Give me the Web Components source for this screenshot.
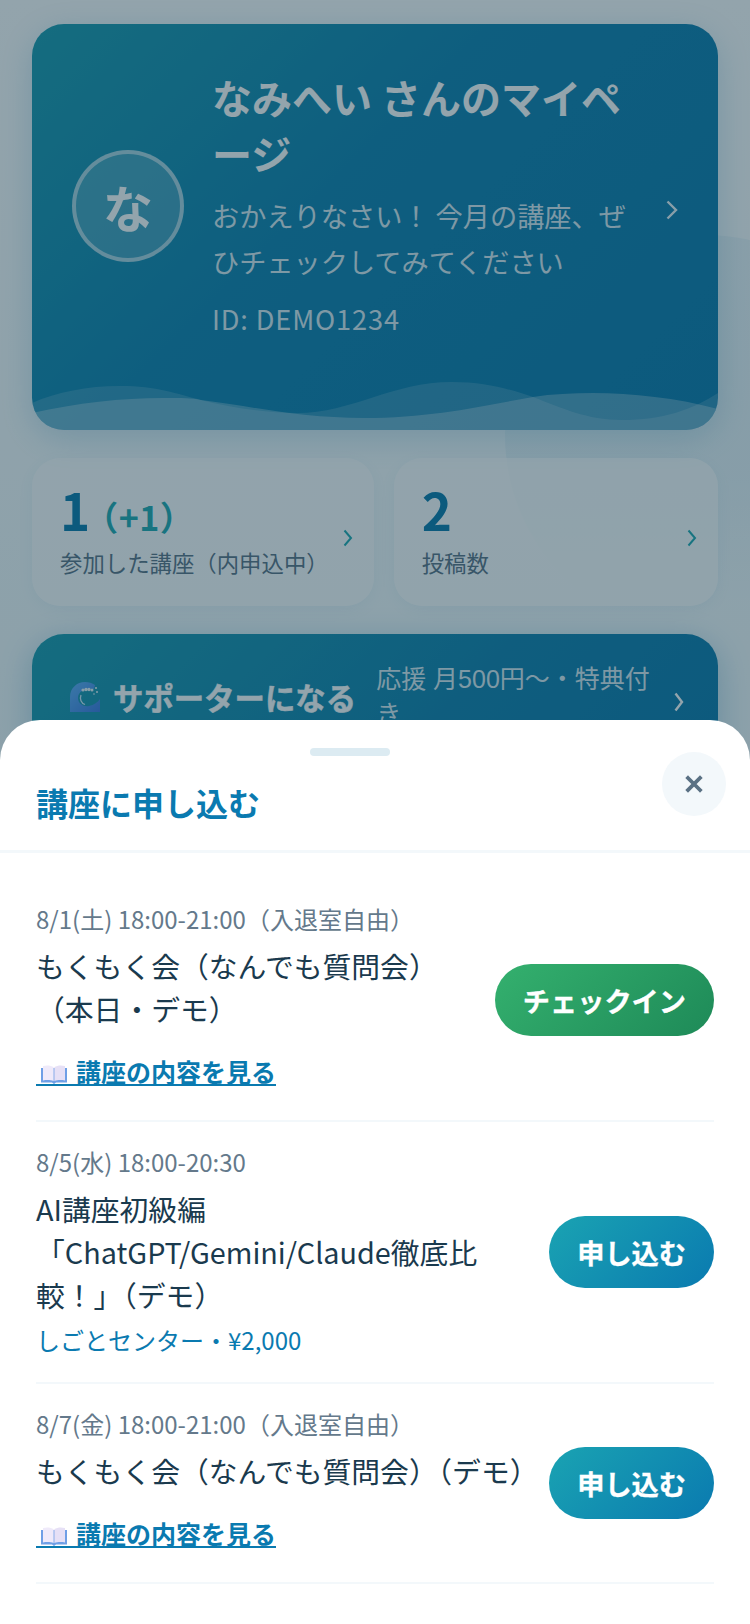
<!DOCTYPE html>
<html lang="ja">
<head>
<meta charset="utf-8">
<title>マイページ</title>
<style>
  html,body{margin:0;height:100%}
  body{
    width:750px;height:1624px;overflow:hidden;
    font-family:"Noto Sans CJK JP","Noto Sans",sans-serif;
    background:linear-gradient(180deg,#fff 0%,#f4fafc 40%,#e6f3f8 100%);
  }
</style>
</head>
<body>
<my-page>
  <hero-card name="なみへい" initial="な" member="DEMO1234"
    message="おかえりなさい！ 今月の講座、ぜひチェックしてみてください"></hero-card>
  <stat-row>
    <stat-card value="1" extra="（+1）" label="参加した講座（内申込中）"></stat-card>
    <stat-card value="2" label="投稿数"></stat-card>
  </stat-row>
  <support-card title-text="サポーターになる" note="応援 月500円〜・特典付き"></support-card>
</my-page>
<dim-layer></dim-layer>
<bottom-sheet heading="講座に申し込む">
  <course-row date="8/1(土) 18:00-21:00（入退室自由）" action="チェックイン" kind="go" link="講座の内容を見る">もくもく会（なんでも質問会）<br>（本日・デモ）</course-row>
  <course-row date="8/5(水) 18:00-20:30" action="申し込む" place="しごとセンター・¥2,000">AI講座初級編「ChatGPT/Gemini/Claude徹底比較！」（デモ）</course-row>
  <course-row date="8/7(金) 18:00-21:00（入退室自由）" action="申し込む" link="講座の内容を見る">もくもく会（なんでも質問会）（デモ）</course-row>
</bottom-sheet>

<script>
const JP='"Noto Sans CJK JP","Noto Sans",sans-serif'
// buttons on the original page keep the UA font, latin first
const BTN='"Liberation Sans","Noto Sans CJK JP",sans-serif'

function chevron(w,h,color,sw){
    return `<svg class="arrow" width="${w}" height="${h}" viewBox="0 0 ${w} ${h}"><path d="M1.500 1.500L${w-2} ${h/2}L1.500 ${h-1.500}" fill="none" stroke="${color}" stroke-width="${sw||2.400}"/></svg>`
}

class myPage extends HTMLElement{
    constructor(){
        super()
        this.attachShadow({mode:'open'})
        this.shadowRoot.innerHTML=`
        <style>
          :host{display:block;position:relative;height:100%;overflow:hidden}
          .blob{position:absolute;left:505px;top:235px;width:400px;height:400px;border-radius:50%;background:linear-gradient(180deg,rgba(10,122,176,.06) 60%,rgba(10,122,176,0) 95%)}
          main{position:relative;display:flex;flex-direction:column;gap:28px;padding:24px 32px 0}
        </style>
        <div class="blob"></div>
        <main><slot></slot></main>`
    }
}

class heroCard extends HTMLElement{
    constructor(){
        super()
        this.attachShadow({mode:'open'})
    }
    connectedCallback(){
        this.shadowRoot.innerHTML=`
        <style>
          :host{display:block}
          .card{
            position:relative;overflow:hidden;box-sizing:border-box;height:406px;
            display:flex;align-items:center;gap:20px;padding:45px 40px 88px 40px;
            border-radius:32px;color:#fff;font-family:${JP};
            background:linear-gradient(135deg,#1a9aae 0%,#0e80ae 42%,#0a78aa 100%);
            box-shadow:0 8px 32px rgba(10,122,176,.2);
          }
          .avatar{
            flex:none;box-sizing:border-box;width:112px;height:112px;border-radius:50%;margin-right:8px;
            display:flex;align-items:center;justify-content:center;
            border:4px solid rgba(255,255,255,.55);background:rgba(255,255,255,.2);
            font-size:50px;font-weight:700;
          }
          .text{flex:1;min-width:0;margin-bottom:5px}
          h1{margin:0 0 11px;font-size:40px;line-height:56px;font-weight:700}
          p{margin:0;font-size:27.200px;line-height:46px;color:rgba(255,255,255,.85)}
          .id{margin-top:14px;line-height:40px;color:rgba(255,255,255,.85);letter-spacing:.85px}
          .arrow{flex:none;margin-top:9px}
          .wave{position:absolute;left:0;bottom:0;width:100%;height:60px;display:block}
        </style>
        <div class="card">
          <div class="avatar">${this.getAttribute('initial')}</div>
          <div class="text">
            <h1>${this.getAttribute('name')} さんのマイページ</h1>
            <p>${this.getAttribute('message')}</p>
            <p class="id">ID: ${this.getAttribute('member')}</p>
          </div>
          ${chevron(12,20,'rgba(255,255,255,.92)')}
          <svg class="wave" viewBox="0 0 686 60" preserveAspectRatio="none">
            <path fill="rgba(255,255,255,.15)" d="M0 33C25 22 55 16 88 16C125 16 145 24 169 30C200 38 235 43 265 43C320 43 360 12 420 12C455 12 480 20 501 27C530 38 555 50 590 50C630 50 660 40 686 23V60H0Z"/>
            <path fill="rgba(255,255,255,.27)" d="M0 43C45 33 90 28 131 28C150 28 160 28 169 30C230 38 270 48 332 48C400 48 450 36 501 27C520 24 540 23 561 23C600 23 645 28 686 39V60H0Z"/>
          </svg>
        </div>`
    }
}

class statRow extends HTMLElement{
    constructor(){
        super()
        this.attachShadow({mode:'open'})
        this.shadowRoot.innerHTML=`
        <style>
          :host{display:grid;grid-template-columns:1fr 1fr;gap:20px}
        </style>
        <slot></slot>`
    }
}

class statCard extends HTMLElement{
    constructor(){
        super()
        this.attachShadow({mode:'open'})
    }
    connectedCallback(){
        const extra=this.getAttribute('extra')
        this.shadowRoot.innerHTML=`
        <style>
          :host{display:block}
          .card{
            box-sizing:border-box;height:148px;display:flex;align-items:center;gap:14px;
            padding:0 21px 0 28px;border-radius:28px;font-family:${JP};
            background:rgba(255,255,255,.72);box-shadow:0 4px 16px rgba(10,122,176,.06);
          }
          .body{flex:1;min-width:0;padding-bottom:7px}
          .num{display:flex;align-items:baseline;height:64px;line-height:64px;font-size:51.200px;font-weight:700;color:#0a78aa}
          .extra{font-size:34px;font-weight:700;color:#1fa8b0;margin-left:11px;letter-spacing:.5px;text-spacing-trim:trim-start}
          .label{margin-top:5px;font-size:22.400px;line-height:33.600px;white-space:nowrap;color:#5a7184}
          .arrow{flex:none;margin-top:12px}
        </style>
        <div class="card">
          <div class="body">
            <div class="num">${this.getAttribute('value')}${extra?`<span class="extra">${extra}</span>`:''}</div>
            <div class="label">${this.getAttribute('label')}</div>
          </div>
          ${chevron(10,18,'#1fa8b0',2)}
        </div>`
    }
}

class supportCard extends HTMLElement{
    constructor(){
        super()
        this.attachShadow({mode:'open'})
    }
    connectedCallback(){
        this.shadowRoot.innerHTML=`
        <style>
          :host{display:block}
          .card{
            box-sizing:border-box;height:126px;display:flex;align-items:center;
            padding:0 34px 0 38px;border-radius:32px;font-family:${BTN};color:#fff;
            background:linear-gradient(135deg,#1a9aae 0%,#0f7fac 60%,#0a78aa 100%);
            box-shadow:0 8px 32px rgba(10,122,176,.3);
          }
          .sea{flex:none;width:30px;height:30px;margin-right:13px}
          b{flex:none;font-size:30.400px;white-space:nowrap;margin-right:20px;-webkit-text-stroke:.5px #fff}
          .note{flex:1;min-width:0;font-size:25px;line-height:35px;color:rgba(255,255,255,.85)}
          .arrow{flex:none;margin:9px 0 0 10px}
        </style>
        <div class="card">
          <svg class="sea" viewBox="0 0 30 30">
            <defs><linearGradient id="sea" x1="0" y1="0" x2="1" y2="1"><stop offset="0" stop-color="#5fb0f8"/><stop offset="1" stop-color="#3a78e0"/></linearGradient></defs>
            <path fill="url(#sea)" d="M0 30V15C0 6 7 0 15 0C19 0 22 1 25 3L24 7C16 6 8 9 8 16C8 22 14 25 19 24C24 23 28 20 30 17V30Z"/>
            <path fill="none" stroke="#cfe8fb" stroke-width="1.300" d="M11 13C9.500 17 11 21 15 22.500"/>
            <g fill="#e8f2fa"><circle cx="13" cy="8" r="1.600"/><circle cx="16" cy="7.500" r="1.700"/><circle cx="19" cy="7.500" r="1.700"/><circle cx="22" cy="8" r="1.500"/><circle cx="26" cy="6" r="1"/><circle cx="27" cy="10" r="1"/><circle cx="24" cy="12" r=".8"/></g>
          </svg>
          <b>${this.getAttribute('title-text')}</b>
          <span class="note">${this.getAttribute('note')}</span>
          ${chevron(10,20,'#fff')}
        </div>`
    }
}

class dimLayer extends HTMLElement{
    constructor(){
        super()
        this.attachShadow({mode:'open'})
        this.shadowRoot.innerHTML=`
        <style>
          :host{position:fixed;inset:0;display:block;background:rgba(15,53,71,.45)}
        </style>`
    }
}

class bottomSheet extends HTMLElement{
    constructor(){
        super()
        this.attachShadow({mode:'open'})
    }
    connectedCallback(){
        this.shadowRoot.innerHTML=`
        <style>
          :host{position:fixed;left:0;right:0;bottom:0;height:904px;display:block;background:#fff;border-radius:40px 40px 0 0;font-family:${JP}}
          header{box-sizing:border-box;height:133px;border-bottom:3px solid #f3f8fb;display:flex;flex-direction:column;padding:28px 36px 0}
          .grip{flex:none;width:80px;height:8px;border-radius:4px;background:#dcebf2;margin-left:274px}
          h2{margin:28px 0 0;font-size:32px;line-height:36px;font-weight:700;color:#0a7ab0}
          .close{position:absolute;right:24px;top:32px;width:64px;height:64px;border-radius:50%;background:#f3f8fb;display:flex;align-items:center;justify-content:center}
          .list{padding:26px 36px 0}
        </style>
        <header>
          <div class="grip"></div>
          <h2>${this.getAttribute('heading')}</h2>
          <div class="close"><svg width="20" height="20" viewBox="0 0 20 20"><path d="M4 4L16 16M16 4L4 16" stroke="#5a7184" stroke-width="3.800" stroke-linecap="square" fill="none"/></svg></div>
        </header>
        <div class="list"><slot></slot></div>`
    }
}

class courseRow extends HTMLElement{
    constructor(){
        super()
        this.attachShadow({mode:'open'})
    }
    getBook(){
        return `<svg width="26" height="19" viewBox="0 0 26 19">
          <path fill="#6f9fe6" d="M0 3H26V17.500H15L13 19L11 17.500H0Z"/>
          <path fill="#efeafa" d="M2 1C6 0 10 .5 12.600 2V16C10 15 6 14.600 2 15.400Z"/>
          <path fill="#e6e0f6" d="M24 1C20 0 16 .5 13.400 2V16C16 15 20 14.600 24 15.400Z"/>
        </svg>`
    }
    connectedCallback(){
        const place=this.getAttribute('place')
        const link=this.getAttribute('link')
        const go=this.getAttribute('kind')==='go'
        this.shadowRoot.innerHTML=`
        <style>
          :host{display:flex;align-items:center;gap:8px;padding:22px 0 21px;border-bottom:2px solid #f3f8fb}
          .info{flex:1;min-width:0}
          .date{font-size:24px;line-height:36px;color:#64798b}
          .name{margin-top:7px;font-size:28.800px;line-height:43.200px;color:#1a3a4e}
          .place{margin:5px 0 3.400px;font-size:24px;line-height:36px;color:#0a7ab0}
          .more{display:flex;margin:28.500px 0 13px}
          a{display:inline-flex;align-items:flex-end;gap:9px;font-size:25px;line-height:25px;font-weight:700;color:#0a7ab0;border-bottom:2px solid #0a7ab0;padding-left:5px}
          button{
            flex:none;height:72px;padding:0 28px;border:0;border-radius:36px;color:#fff;
            font-family:${BTN};font-size:27.200px;font-weight:700;-webkit-text-stroke:.3px #fff;
            background:linear-gradient(135deg,#1aa3b2,#0a7ab0);
          }
          button.go{background:linear-gradient(135deg,#34b06e,#1e8a58)}
        </style>
        <div class="info">
          <div class="date">${this.getAttribute('date')}</div>
          <div class="name"><slot></slot></div>
          ${place?`<div class="place">${place}</div>`:''}
          ${link?`<div class="more"><a>${this.getBook()}<span>${link}</span></a></div>`:''}
        </div>
        <button class="${go?'go':''}">${this.getAttribute('action')}</button>`
    }
}

customElements.define('my-page',myPage)
customElements.define('hero-card',heroCard)
customElements.define('stat-row',statRow)
customElements.define('stat-card',statCard)
customElements.define('support-card',supportCard)
customElements.define('dim-layer',dimLayer)
customElements.define('bottom-sheet',bottomSheet)
customElements.define('course-row',courseRow)
</script>
</body>
</html>
